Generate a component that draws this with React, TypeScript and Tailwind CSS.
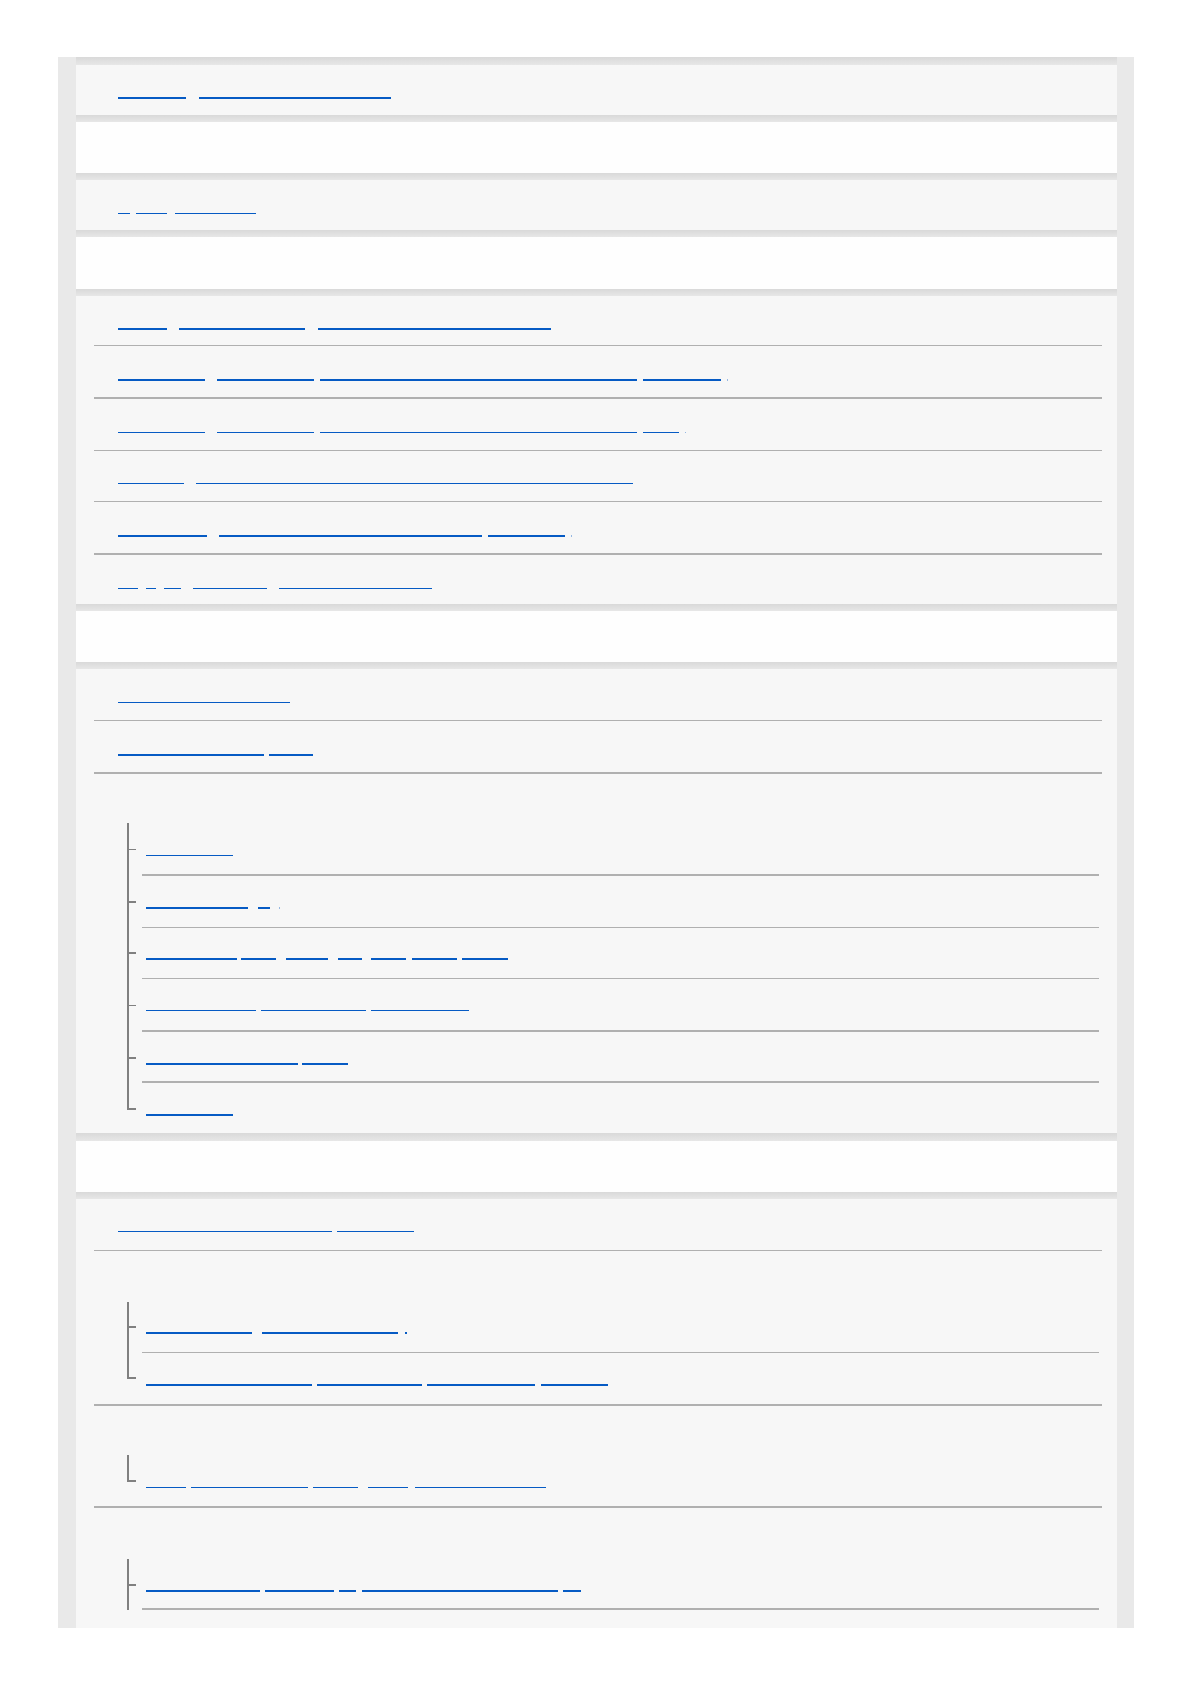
import React from "react";

// [class names of one underlined link segment, its text]
type Seg = [string, string];

type Row = {
  kind: "row";
  cls: string;
  t: 1 | 2;
  segs: Seg[];
};

type Item = {
  cls: string;
  tick: string;
  t: 1 | 2;
  last?: boolean;
  segs: Seg[];
};

type Group = {
  kind: "group";
  sep: string;
  head: string;
  title: string;
  items: Item[];
};

type Section =
  | { type: "title"; gap: string; cls: string; title: string }
  | { type: "list"; gap: string; pb?: string; rows: (Row | Group)[] };

const GAP7 = "h-[7px]";
const GAP8 = "h-[8px]";

const sections: Section[] = [
  {
    type: "list",
    gap: GAP8,
    rows: [
      { kind: "row", cls: "h-[50px] pt-[14px]", t: 2, segs: [["w-[68px]", "Before"], ["ml-[13px] w-[192px]", "Read this first before use"]] },
    ],
  },
  { type: "title", gap: GAP7, cls: "h-[51px]", title: "Getting started" },
  {
    type: "list",
    gap: GAP7,
    rows: [
      { kind: "row", cls: "h-[50px] pt-[14px]", t: 1, segs: [["w-[12px]", "A"], ["ml-[6px] w-[31px]", "Top"], ["ml-[8px] w-[81px]", "Page index"]] },
    ],
  },
  { type: "title", gap: GAP7, cls: "h-[52px]", title: "Names of parts" },
  {
    type: "list",
    gap: GAP7,
    rows: [
      {
        kind: "row",
        cls: "h-[49px] pt-[14px]",
        t: 2,
        segs: [["w-[49px]", "Front"], ["ml-[12px] w-[126px]", "Names of parts"], ["ml-[13px] w-[233px]", "Front side and top of camera"]],
      },
      {
        kind: "row",
        cls: "h-[52px] border-t pt-[15px]",
        t: 2,
        segs: [
          ["w-[87px]", "Checking"],
          ["ml-[12px] w-[97px]", "the items"],
          ["ml-[6px] w-[317px]", "supplied with the camera and accessories"],
          ["ml-[6px] w-[78px]", "in box"],
          ["ml-[6px] w-[1px] opacity-40", ""],
        ],
      },
      {
        kind: "row",
        cls: "h-[53px] border-t-2 pt-[14px]",
        t: 1,
        segs: [
          ["w-[87px]", "Checking"],
          ["ml-[12px] w-[97px]", "the items"],
          ["ml-[6px] w-[317px]", "about the battery pack and charging time"],
          ["ml-[6px] w-[36px]", "use"],
          ["ml-[6px] w-[1px] opacity-40", ""],
        ],
      },
      {
        kind: "row",
        cls: "h-[51px] border-t pt-[13px]",
        t: 1,
        segs: [["w-[66px]", "Basic"], ["ml-[12px] w-[437px]", "operations using the control wheel and the buttons"]],
      },
      {
        kind: "row",
        cls: "h-[52px] border-t pt-[15px]",
        t: 2,
        segs: [
          ["w-[89px]", "Using the"],
          ["ml-[12px] w-[263px]", "menu items and function menu"],
          ["ml-[6px] w-[77px]", "screen"],
          ["ml-[6px] w-[1px] opacity-40", ""],
        ],
      },
      {
        kind: "row",
        cls: "h-[51px] border-t-2 pt-[14px]",
        t: 1,
        segs: [
          ["w-[20px]", "On"],
          ["ml-[8px] w-[10px]", "a"],
          ["ml-[8px] w-[17px]", "In"],
          ["ml-[12px] w-[74px]", "Display"],
          ["ml-[12px] w-[153px]", "screen indicators"],
        ],
      },
    ],
  },
  { type: "title", gap: GAP7, cls: "h-[51px]", title: "Preparing the camera" },
  {
    type: "list",
    gap: GAP7,
    rows: [
      { kind: "row", cls: "h-[51px] pt-[14px]", t: 1, segs: [["w-[172px]", "Charging the battery"]] },
      { kind: "row", cls: "h-[52px] border-t pt-[15px]", t: 2, segs: [["w-[146px]", "Inserting the memory"], ["ml-[5px] w-[44px]", "card"]] },
      {
        kind: "group",
        sep: "border-t-2",
        head: "h-[49px]",
        title: "Setting the camera",
        items: [
          { cls: "h-[53px] border-b-2 pt-[13px]", tick: "h-[27px] border-b", t: 1, segs: [["w-[87px]", "Language"]] },
          {
            cls: "h-[52px] border-b pt-[13px]",
            tick: "h-[27px] border-b-2",
            t: 2,
            segs: [["w-[102px]", "Date/Time"], ["ml-[10px] w-[12px]", "A"], ["ml-[9px] w-[1px] opacity-40", ""]],
          },
          {
            cls: "h-[51px] border-b pt-[12px]",
            tick: "h-[26px] border-b-2",
            t: 2,
            segs: [
              ["w-[91px]", "Attaching"],
              ["ml-[4px] w-[35px]", "the"],
              ["ml-[10px] w-[42px]", "lens"],
              ["ml-[10px] w-[24px]", "to"],
              ["ml-[9px] w-[35px]", "the"],
              ["ml-[6px] w-[45px]", "main"],
              ["ml-[5px] w-[46px]", "body"],
            ],
          },
          {
            cls: "h-[53px] border-b-2 pt-[12px]",
            tick: "h-[27px] border-b",
            t: 1,
            segs: [["w-[110px]", "Removing the"], ["ml-[5px] w-[105px]", "lens from the"], ["ml-[5px] w-[98px]", "camera body"]],
          },
          {
            cls: "h-[51px] border-b-2 pt-[13px]",
            tick: "h-[27px] border-b-2",
            t: 2,
            segs: [["w-[152px]", "Attaching the shoulder"], ["ml-[4px] w-[46px]", "strap"]],
          },
          { cls: "h-[50px] pt-[13px]", tick: "h-[27px] border-b-2", t: 2, last: true, segs: [["w-[87px]", "Eyepiece"]] },
        ],
      },
    ],
  },
  { type: "title", gap: GAP8, cls: "h-[51px]", title: "Shooting" },
  {
    type: "list",
    gap: GAP7,
    pb: "pb-[18px]",
    rows: [
      { kind: "row", cls: "h-[51px] pt-[13px]", t: 1, segs: [["w-[214px]", "Shooting still images with"], ["ml-[5px] w-[77px]", "Auto mode"]] },
      {
        kind: "group",
        sep: "border-t",
        head: "h-[51px]",
        title: "Focusing",
        items: [
          {
            cls: "h-[51px] border-b pt-[12px]",
            tick: "h-[26px] border-b-2",
            t: 2,
            segs: [["w-[106px]", "Focus Mode"], ["ml-[10px] w-[136px]", "Focus Area settings"], ["ml-[7px] w-[2px]", ""]],
          },
          {
            cls: "h-[51px] pt-[13px]",
            tick: "h-[26px] border-b-2",
            t: 2,
            last: true,
            segs: [
              ["w-[166px]", "Tracking the subject"],
              ["ml-[5px] w-[105px]", "with the"],
              ["ml-[5px] w-[108px]", "focus frame"],
              ["ml-[6px] w-[67px]", "Lock-on"],
            ],
          },
        ],
      },
      {
        kind: "group",
        sep: "border-t-2",
        head: "h-[49px]",
        title: "Exposure",
        items: [
          {
            cls: "h-[51px] pt-[13px]",
            tick: "h-[27px] border-b-2",
            t: 1,
            last: true,
            segs: [
              ["w-[40px]", "ISO"],
              ["ml-[5px] w-[117px]", "Exposure value"],
              ["ml-[5px] w-[45px]", "Meter"],
              ["ml-[10px] w-[40px]", "Mode"],
              ["ml-[7px] w-[131px]", "White Balance set"],
            ],
          },
        ],
      },
      {
        kind: "group",
        sep: "border-t-2",
        head: "h-[51px]",
        title: "Drive mode",
        items: [
          {
            cls: "h-[51px] border-b-2 pt-[13px]",
            tick: "h-[27px] border-b-2",
            t: 2,
            segs: [
              ["w-[114px]", "Continuous"],
              ["ml-[5px] w-[69px]", "Self-timer"],
              ["ml-[5px] w-[17px]", "of"],
              ["ml-[6px] w-[196px]", "Bracket shooting settings"],
              ["ml-[5px] w-[18px]", "on"],
            ],
          },
        ],
      },
    ],
  },
];

function Links({ segs, t }: { segs: Seg[]; t: 1 | 2 }) {
  return (
    <div className="flex">
      {segs.map(([cls, word], i) => (
        <a
          key={i}
          href="#"
          className={`block h-[20px] shrink-0 overflow-hidden whitespace-nowrap border-[#065bc4] text-[13px] leading-[18px] text-transparent ${t === 2 ? "border-b-2" : "border-b"} ${cls}`}
        >
          {word}
        </a>
      ))}
    </div>
  );
}

function PlainRow({ row }: { row: Row }) {
  return (
    <div className={`border-[#b0b0b0] pl-[24px] ${row.cls}`}>
      <Links segs={row.segs} t={row.t} />
    </div>
  );
}

function TreeRow({ group }: { group: Group }) {
  return (
    <div className={`border-[#b0b0b0] ${group.sep}`}>
      <div className={`pl-[24px] pt-[14px] text-[13px] leading-[18px] text-transparent ${group.head}`}>{group.title}</div>
      <ul className="pl-[33px] pr-[3px]">
        {group.items.map((it, i) => (
          <li key={i} className="flex">
            <div className="flex w-[9px] shrink-0 flex-col">
              <div className={`border-l-2 border-[#808080] ${it.tick}`} />
              {!it.last && <div className="flex-1 border-l-2 border-[#808080]" />}
            </div>
            <div className={`ml-[6px] flex-1 border-[#b0b0b0] pl-[4px] ${it.cls}`}>
              <Links segs={it.segs} t={it.t} />
            </div>
          </li>
        ))}
      </ul>
    </div>
  );
}

export default function App() {
  return (
    <div className="min-h-[1685px] bg-white pt-[57px] font-['Liberation_Sans',Arial,sans-serif]">
      <div className="ml-[58px] w-[1076px] bg-[#e9e9e9] pl-[18px] pr-[17px]">
        {sections.map((s, i) => (
          <React.Fragment key={i}>
            <div className={`bg-linear-to-b from-[#d9d9d9] to-[#e7e7e7] ${s.gap}`} />
            {s.type === "title" ? (
              <div className={`bg-[#fefefe] pl-[42px] pt-[16px] text-[15px] leading-[20px] text-transparent ${s.cls}`}>{s.title}</div>
            ) : (
              <div className={`bg-[#f7f7f7] pl-[18px] pr-[15px] ${s.pb ?? ""}`}>
                {s.rows.map((r, j) => (r.kind === "row" ? <PlainRow key={j} row={r} /> : <TreeRow key={j} group={r} />))}
              </div>
            )}
          </React.Fragment>
        ))}
      </div>
    </div>
  );
}
